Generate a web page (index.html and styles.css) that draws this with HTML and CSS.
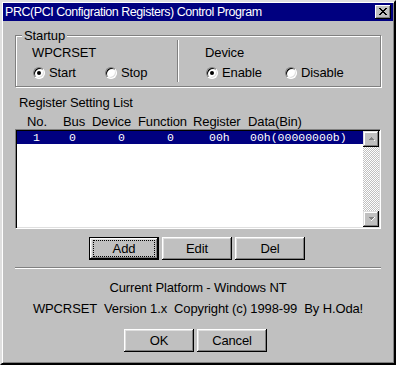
FILE: index.html
```html
<!DOCTYPE html>
<html lang="en">
<head>
    <meta charset="UTF-8">
    <title>PRC Control Program</title>
    <link rel="stylesheet" href="styles.css">
</head>
<body>
    <div class="window">
        <div class="titlebar">
            <span class="title">PRC(PCI Configration Registers) Control Program</span>
            <span class="close">
                <svg width="8" height="7" viewBox="0 0 8 7" shape-rendering="crispEdges">
                    <path d="M0 0h2v1h-2zM6 0h2v1h-2zM1 1h2v1h-2zM5 1h2v1h-2zM2 2h4v1h-4zM3 3h2v1h-2zM2 4h4v1h-4zM1 5h2v1h-2zM5 5h2v1h-2zM0 6h2v1h-2zM6 6h2v1h-2z" fill="#000"/>
                </svg>
            </span>
        </div>

        <div class="content">
            <div class="group">
                <div class="group-title">Startup</div>
                <div class="group-body">
                    <div class="group-col left">
                        <div class="col-label">WPCRSET</div>
                        <div class="options">
                            <span class="option first"><span class="radio checked"></span>Start</span>
                            <span class="option"><span class="radio"></span>Stop</span>
                        </div>
                    </div>
                    <div class="vsep"></div>
                    <div class="group-col right">
                        <div class="col-label">Device</div>
                        <div class="options">
                            <span class="option first wide"><span class="radio checked"></span>Enable</span>
                            <span class="option"><span class="radio"></span>Disable</span>
                        </div>
                    </div>
                </div>
            </div>

            <div class="list-title">Register Setting List</div>
            <div class="list-head">
                <span>No.</span>
                <span>Bus</span>
                <span>Device</span>
                <span>Function</span>
                <span>Register</span>
                <span>Data(Bin)</span>
            </div>
            <div class="listbox">
                <div class="rows">
                    <div class="row selected">
                        <span>1</span>
                        <span>0</span>
                        <span>0</span>
                        <span>0</span>
                        <span>00h</span>
                        <span>00h(00000000b)</span>
                    </div>
                </div>
                <div class="scrollbar">
                    <span class="sbtn">
                        <svg width="7" height="4" viewBox="0 0 7 4" shape-rendering="crispEdges">
                            <path d="M1 4h6v-1h-1v-1h-1v-1h-1v1h1v1h1v1z" fill="#fff"/>
                            <path d="M3 0h1v1h1v1h1v1h-5v-1h1v-1h1z" fill="#808080"/>
                        </svg>
                    </span>
                    <span class="track"></span>
                    <span class="sbtn">
                        <svg width="7" height="4" viewBox="0 0 7 4" shape-rendering="crispEdges">
                            <path d="M0 0h6v1h-1v1h-1v1h-1v-1h-1v-1h-1v-1z" fill="#808080"/>
                            <path d="M6 0h1v1h-1v1h-1v1h-1v1h-1v-1h1v-1h1v-1h1z" fill="#fff"/>
                        </svg>
                    </span>
                </div>
            </div>

            <div class="buttons top">
                <button class="btn default"><span class="focus">Add</span></button>
                <button class="btn">Edit</button>
                <button class="btn">Del</button>
            </div>

            <div class="hsep"></div>

            <div class="info first">Current Platform - Windows NT</div>
            <div class="info">WPCRSET&nbsp; Version 1.x&nbsp; Copyright (c) 1998-99&nbsp; By H.Oda!</div>

            <div class="buttons bottom">
                <button class="btn">OK</button>
                <button class="btn">Cancel</button>
            </div>
        </div>
    </div>
</body>
</html>
```

FILE: styles.css
```css
body {
    margin: 0;
    background: #c0c0c0;
    font-family: "Liberation Sans", Arial, sans-serif;
    font-size: 13px;
    letter-spacing: -0.12px;
    color: #000;
}
.window {
    box-sizing: border-box;
    width: 396px;
    height: 365px;
    background: #c0c0c0;
    border: 2px solid;
    border-color: #dfdfdf #000 #000 #dfdfdf;
    box-shadow: inset 1px 1px #fff, inset -1px -1px #808080;
    padding: 1px;
}
.titlebar {
    height: 18px;
    background: #000080;
    color: #fff;
    display: flex;
    align-items: center;
    justify-content: space-between;
    padding-left: 2px;
}
.title {
    line-height: 18px;
    font-size: 12.5px;
    letter-spacing: -0.45px;
}
.close {
    box-sizing: border-box;
    width: 16px;
    height: 14px;
    margin-right: 2px;
    background: #c0c0c0;
    box-shadow: inset -1px -1px #000, inset 1px 1px #fff, inset -2px -2px #808080;
    display: flex;
    align-items: center;
    justify-content: center;
    padding-bottom: 1px;
}

.content {
    padding: 0 12px;
}

/* startup group */
.group {
    box-sizing: border-box;
    width: 366px;
    height: 52px;
    margin-top: 14px;
    border: 1px solid #808080;
    box-shadow: inset 1px 1px #fff, 1px 1px #fff;
}
.group-title {
    width: max-content;
    line-height: 15px;
    margin: -8px 0 -7px 6px;
    padding: 0 2px;
    background: #c0c0c0;
}
.group-body {
    display: flex;
    height: 50px;
}
.group-col {
    line-height: 15px;
    padding-top: 9px;
}
.group-col.left {
    width: 161px;
    padding-left: 16px;
    box-sizing: border-box;
}
.group-col.right {
    flex: 1;
    padding-left: 26px;
}
.vsep {
    width: 0;
    margin: 4px 0;
    border-left: 1px solid #808080;
    border-right: 1px solid #fff;
}
.options {
    display: flex;
    margin-top: 5px;
    margin-left: 1px;
}
.option {
    display: flex;
    align-items: center;
    gap: 4px;
}
.option.first {
    width: 72px;
}
.option.first.wide {
    width: 79px;
}
.radio {
    box-sizing: border-box;
    width: 12px;
    height: 12px;
    border-radius: 50%;
    background: #fff;
    border: 1px solid;
    border-color: #808080 #fff #fff #808080;
    box-shadow: inset 1px 1px #000, inset -1px -1px #dfdfdf;
    display: flex;
    align-items: center;
    justify-content: center;
}
.radio.checked::after {
    content: "";
    width: 4px;
    height: 4px;
    border-radius: 50%;
    background: #000;
}

/* register list */
.list-title {
    line-height: 15px;
    margin-top: 8px;
    padding-left: 4px;
}
.list-head {
    display: grid;
    grid-template-columns: 36px 29px 46px 55px 55px auto;
    line-height: 15px;
    margin-top: 4px;
    padding-left: 12px;
}
.listbox {
    box-sizing: border-box;
    width: 366px;
    height: 100px;
    display: flex;
    background: #fff;
    border: 1px solid;
    border-color: #808080 #fff #fff #808080;
    box-shadow: inset 1px 1px #000, inset -1px -1px #dfdfdf;
    padding: 1px;
}
.rows {
    flex: 1;
}
.row {
    display: grid;
    grid-template-columns: 36px 49px 49px 42px 41px auto;
    height: 13px;
    line-height: 13px;
    padding-left: 16px;
    font-family: "Liberation Mono", "Courier New", monospace;
    font-size: 11.5px;
    letter-spacing: 0;
}
.row.selected {
    background: #000080;
    color: #fff;
}
.scrollbar {
    width: 16px;
    display: flex;
    flex-direction: column;
}
.sbtn {
    box-sizing: border-box;
    width: 16px;
    height: 16px;
    background: #c0c0c0;
    box-shadow: inset -1px -1px #000, inset 1px 1px #dfdfdf, inset -2px -2px #808080, inset 2px 2px #fff;
    display: flex;
    align-items: center;
    justify-content: center;
}
.track {
    flex: 1;
    background-image: repeating-conic-gradient(#c0c0c0 0 25%, #fff 0 50%);
    background-size: 2px 2px;
}

/* buttons */
.buttons {
    display: flex;
    gap: 3px;
}
.buttons.top {
    margin-top: 8px;
    padding-left: 74px;
}
.buttons.bottom {
    margin-top: 13px;
    padding-left: 109px;
}
.btn {
    box-sizing: border-box;
    width: 70px;
    height: 23px;
    padding: 0;
    border: none;
    background: #c0c0c0;
    font-family: "Liberation Sans", Arial, sans-serif;
    font-size: 13px;
    letter-spacing: -0.12px;
    color: #000;
    box-shadow: inset -1px -1px #000, inset 1px 1px #fff, inset -2px -2px #808080, inset 2px 2px #dfdfdf;
    display: flex;
    align-items: center;
    justify-content: center;
}
.btn.default {
    border: 1px solid #000;
}
.focus {
    box-sizing: border-box;
    width: 62px;
    height: 17px;
    border: 1px dotted #000;
    line-height: 15px;
    text-align: center;
}

.hsep {
    width: 366px;
    margin-top: 7px;
    border-top: 1px solid #808080;
    border-bottom: 1px solid #fff;
}
.info {
    line-height: 15px;
    text-align: center;
    margin-top: 6px;
}
.info.first {
    margin-top: 11px;
}
```
